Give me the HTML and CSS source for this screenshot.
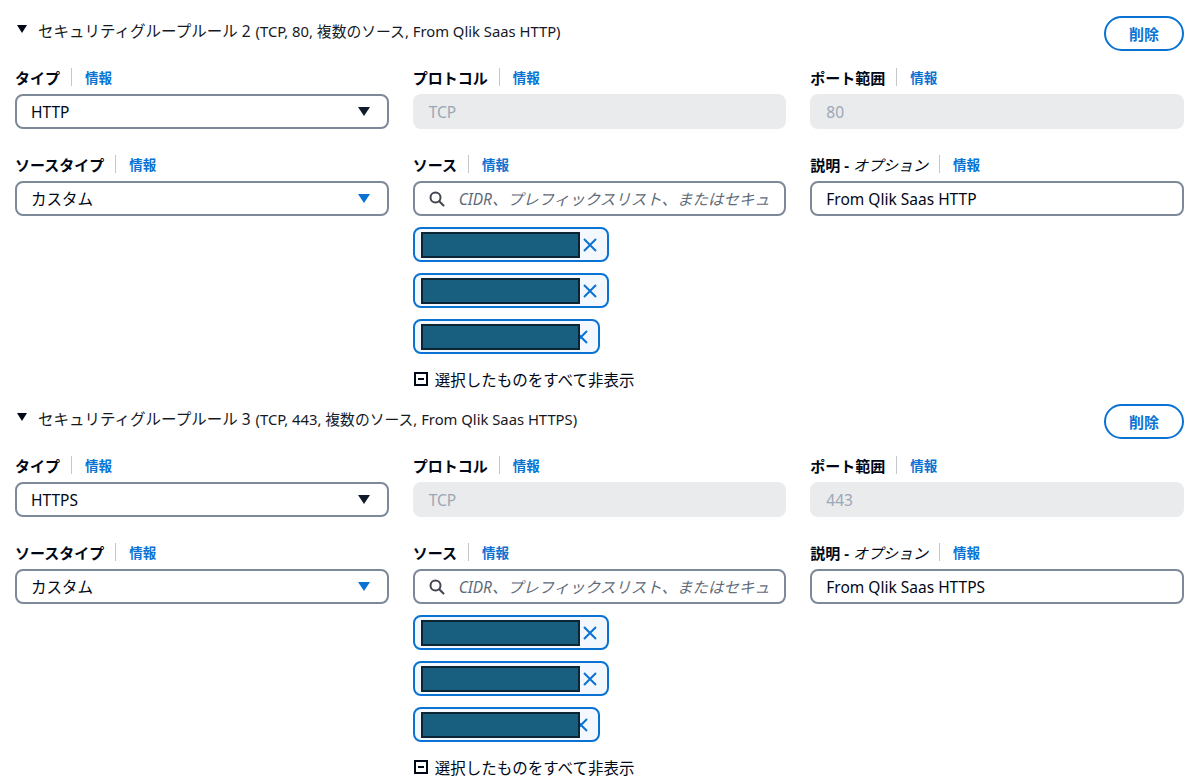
FILE: index.html
```html
<!DOCTYPE html>
<html lang="ja">
<head>
  <meta charset="UTF-8" />
  <title>インバウンドルール</title>
  <link rel="stylesheet" href="styles.css">
</head>
<body>
  <div class="page">
    <div class="rule">
      <div class="rule-head">
        <div class="rule-title">
          <span class="caret"></span>
          <span class="title-main">セキュリティグループルール 2</span>
          <span class="title-sub">(TCP, 80, 複数のソース, From Qlik Saas HTTP)</span>
        </div>
        <button class="btn-delete">削除</button>
      </div>
      <div class="fields">
        <div class="field">
          <div class="label"><span class="label-text">タイプ</span><span class="sep"></span><a class="info">情報</a></div>
          <div class="select"><span>HTTP</span><span class="arrow dark"></span></div>
        </div>
        <div class="field">
          <div class="label"><span class="label-text">プロトコル</span><span class="sep"></span><a class="info">情報</a></div>
          <div class="input disabled">TCP</div>
        </div>
        <div class="field">
          <div class="label"><span class="label-text">ポート範囲</span><span class="sep"></span><a class="info">情報</a></div>
          <div class="input disabled">80</div>
        </div>
        <div class="field">
          <div class="label"><span class="label-text">ソースタイプ</span><span class="sep"></span><a class="info">情報</a></div>
          <div class="select"><span>カスタム</span><span class="arrow"></span></div>
        </div>
        <div class="field">
          <div class="label"><span class="label-text">ソース</span><span class="sep"></span><a class="info">情報</a></div>
          <div class="input search">
            <svg class="search-icon" width="16" height="16" viewBox="0 0 16 16"><circle cx="6.5" cy="6.5" r="5" fill="none" stroke="#424650" stroke-width="2"/><line x1="10.2" y1="10.2" x2="14.5" y2="14.5" stroke="#424650" stroke-width="2" stroke-linecap="round"/></svg>
            <span class="placeholder">CIDR、プレフィックスリスト、またはセキュリティグループ</span>
          </div>
          <div class="tokens">
            <div class="token"><span class="redact"></span><svg class="dismiss" width="16" height="16" viewBox="0 0 16 16"><path d="M2 2 L14 14 M14 2 L2 14" stroke="#0972d3" stroke-width="2"/></svg></div>
            <div class="token"><span class="redact"></span><svg class="dismiss" width="16" height="16" viewBox="0 0 16 16"><path d="M2 2 L14 14 M14 2 L2 14" stroke="#0972d3" stroke-width="2"/></svg></div>
            <div class="token short"><span class="redact"></span><svg class="dismiss" width="16" height="16" viewBox="0 0 16 16"><path d="M2 2 L14 14 M14 2 L2 14" stroke="#0972d3" stroke-width="2"/></svg></div>
          </div>
          <div class="hide-all"><span class="minus-box"></span>選択したものをすべて非表示</div>
        </div>
        <div class="field">
          <div class="label"><span class="label-text">説明 - <i>オプション</i></span><span class="sep"></span><a class="info">情報</a></div>
          <div class="input">From Qlik Saas HTTP</div>
        </div>
      </div>
    </div>

    <div class="rule">
      <div class="rule-head">
        <div class="rule-title">
          <span class="caret"></span>
          <span class="title-main">セキュリティグループルール 3</span>
          <span class="title-sub">(TCP, 443, 複数のソース, From Qlik Saas HTTPS)</span>
        </div>
        <button class="btn-delete">削除</button>
      </div>
      <div class="fields">
        <div class="field">
          <div class="label"><span class="label-text">タイプ</span><span class="sep"></span><a class="info">情報</a></div>
          <div class="select"><span>HTTPS</span><span class="arrow dark"></span></div>
        </div>
        <div class="field">
          <div class="label"><span class="label-text">プロトコル</span><span class="sep"></span><a class="info">情報</a></div>
          <div class="input disabled">TCP</div>
        </div>
        <div class="field">
          <div class="label"><span class="label-text">ポート範囲</span><span class="sep"></span><a class="info">情報</a></div>
          <div class="input disabled">443</div>
        </div>
        <div class="field">
          <div class="label"><span class="label-text">ソースタイプ</span><span class="sep"></span><a class="info">情報</a></div>
          <div class="select"><span>カスタム</span><span class="arrow"></span></div>
        </div>
        <div class="field">
          <div class="label"><span class="label-text">ソース</span><span class="sep"></span><a class="info">情報</a></div>
          <div class="input search">
            <svg class="search-icon" width="16" height="16" viewBox="0 0 16 16"><circle cx="6.5" cy="6.5" r="5" fill="none" stroke="#424650" stroke-width="2"/><line x1="10.2" y1="10.2" x2="14.5" y2="14.5" stroke="#424650" stroke-width="2" stroke-linecap="round"/></svg>
            <span class="placeholder">CIDR、プレフィックスリスト、またはセキュリティグループ</span>
          </div>
          <div class="tokens">
            <div class="token"><span class="redact"></span><svg class="dismiss" width="16" height="16" viewBox="0 0 16 16"><path d="M2 2 L14 14 M14 2 L2 14" stroke="#0972d3" stroke-width="2"/></svg></div>
            <div class="token"><span class="redact"></span><svg class="dismiss" width="16" height="16" viewBox="0 0 16 16"><path d="M2 2 L14 14 M14 2 L2 14" stroke="#0972d3" stroke-width="2"/></svg></div>
            <div class="token short"><span class="redact"></span><svg class="dismiss" width="16" height="16" viewBox="0 0 16 16"><path d="M2 2 L14 14 M14 2 L2 14" stroke="#0972d3" stroke-width="2"/></svg></div>
          </div>
          <div class="hide-all"><span class="minus-box"></span>選択したものをすべて非表示</div>
        </div>
        <div class="field">
          <div class="label"><span class="label-text">説明 - <i>オプション</i></span><span class="sep"></span><a class="info">情報</a></div>
          <div class="input">From Qlik Saas HTTPS</div>
        </div>
      </div>
    </div>
  </div>
</body>
</html>
```

FILE: styles.css
```css
body {
  margin: 0;
  background: #fff;
  color: #000716;
  font-family: 'Noto Sans', 'Noto Sans CJK JP', sans-serif;
  font-size: 15px;
}
.page {
  padding: 16px 11px 0 15px;
}
.rule {
  margin-bottom: 15px;
}
.rule-head {
  display: flex;
  justify-content: space-between;
  align-items: center;
  height: 35px;
}
.rule-title {
  display: flex;
  align-items: center;
  padding-left: 2px;
  margin-top: -6px;
}
.caret {
  width: 0;
  height: 0;
  border-left: 5px solid transparent;
  border-right: 5px solid transparent;
  border-top: 8px solid #000716;
  margin-right: 11px;
  margin-top: -4px;
}
.title-main {
  font-size: 15.5px;
  margin-right: 5px;
  color: #16191f;
}
.title-sub {
  font-size: 14.8px;
  color: #16191f;
}
.btn-delete {
  width: 80px;
  height: 35px;
  border: 2px solid #0972d3;
  border-radius: 20px;
  background: #fff;
  color: #0972d3;
  font-family: inherit;
  font-size: 15px;
  font-weight: bold;
  cursor: pointer;
}
.fields {
  display: grid;
  grid-template-columns: repeat(3, minmax(0, 1fr));
  column-gap: 24px;
  row-gap: 25px;
  margin-top: 16px;
}
.label {
  display: flex;
  align-items: center;
  height: 20px;
  margin-bottom: 7px;
}
.label-text {
  font-weight: bold;
  font-size: 15px;
}
.label-text i {
  font-weight: normal;
}
.sep {
  width: 1px;
  height: 18px;
  background: #c6c6cd;
  margin: 0 13px 0 11px;
}
.info {
  color: #0972d3;
  font-weight: bold;
  font-size: 13.5px;
}
.select, .input {
  box-sizing: border-box;
  height: 35px;
  border: 2px solid #7d8998;
  border-radius: 8px;
  padding: 0 14px;
  display: flex;
  align-items: center;
  font-size: 15.5px;
}
.select {
  justify-content: space-between;
  padding-right: 17px;
}
.arrow {
  width: 0;
  height: 0;
  border-left: 6.5px solid transparent;
  border-right: 6.5px solid transparent;
  border-top: 9px solid #0972d3;
}
.arrow.dark {
  border-top-color: #0f1b2a;
}
.input.disabled {
  background: #e9ebed;
  border-color: #e9ebed;
  color: #9ba7b6;
}
.input.search {
  overflow: hidden;
  white-space: nowrap;
}
.search-icon {
  flex-shrink: 0;
  margin-right: 14px;
}
.placeholder {
  color: #5f6b7a;
  font-style: italic;
  overflow: hidden;
  min-width: 0;
}
.tokens {
  display: flex;
  flex-direction: column;
  align-items: flex-start;
  gap: 11px;
  margin-top: 11px;
}
.token {
  box-sizing: border-box;
  height: 35px;
  border: 2px solid #0972d3;
  border-radius: 8px;
  background: #f2f8fd;
  display: flex;
  align-items: center;
  padding: 0 9px 0 6px;
}
.redact {
  position: relative;
  z-index: 1;
  box-sizing: border-box;
  width: 159px;
  height: 26px;
  background: #175e7f;
  border: 2px solid #0c2535;
}
.dismiss {
  margin-left: 2px;
}
.token.short .dismiss {
  margin-left: -7px;
}
.hide-all {
  display: flex;
  align-items: center;
  height: 20px;
  margin-top: 15px;
  font-size: 15.5px;
  color: #000716;
}
.minus-box {
  box-sizing: border-box;
  width: 14px;
  height: 14px;
  border: 2px solid #000716;
  margin: 0 7px 0 1px;
  position: relative;
}
.minus-box::after {
  content: '';
  position: absolute;
  left: 2px;
  right: 2px;
  top: 4px;
  height: 2px;
  background: #000716;
}
```
